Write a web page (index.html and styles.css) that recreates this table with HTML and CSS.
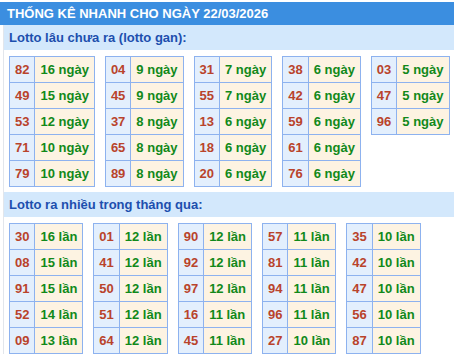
FILE: index.html
```html
<!DOCTYPE html>
<html lang="vi">
<head>
<meta charset="utf-8">
<link rel="stylesheet" href="styles.css">
</head>
<body>
<div class="title">THỐNG KÊ NHANH CHO NGÀY 22/03/2026</div>
<div class="content">
  <div class="head">Lotto lâu chưa ra (lotto gan):</div>
  <div class="tables">
    <table><tr><td class="n">82</td><td class="d">16 ngày</td></tr><tr><td class="n">49</td><td class="d">15 ngày</td></tr><tr><td class="n">53</td><td class="d">12 ngày</td></tr><tr><td class="n">71</td><td class="d">10 ngày</td></tr><tr><td class="n">79</td><td class="d">10 ngày</td></tr></table>
    <table><tr><td class="n">04</td><td class="d">9 ngày</td></tr><tr><td class="n">45</td><td class="d">9 ngày</td></tr><tr><td class="n">37</td><td class="d">8 ngày</td></tr><tr><td class="n">65</td><td class="d">8 ngày</td></tr><tr><td class="n">89</td><td class="d">8 ngày</td></tr></table>
    <table><tr><td class="n">31</td><td class="d">7 ngày</td></tr><tr><td class="n">55</td><td class="d">7 ngày</td></tr><tr><td class="n">13</td><td class="d">6 ngày</td></tr><tr><td class="n">18</td><td class="d">6 ngày</td></tr><tr><td class="n">20</td><td class="d">6 ngày</td></tr></table>
    <table><tr><td class="n">38</td><td class="d">6 ngày</td></tr><tr><td class="n">42</td><td class="d">6 ngày</td></tr><tr><td class="n">59</td><td class="d">6 ngày</td></tr><tr><td class="n">61</td><td class="d">6 ngày</td></tr><tr><td class="n">76</td><td class="d">6 ngày</td></tr></table>
    <table><tr><td class="n">03</td><td class="d">5 ngày</td></tr><tr><td class="n">47</td><td class="d">5 ngày</td></tr><tr><td class="n">96</td><td class="d">5 ngày</td></tr></table>
  </div>
  <div class="head">Lotto ra nhiều trong tháng qua:</div>
  <div class="tables">
    <table><tr><td class="n">30</td><td class="d">16 lần</td></tr><tr><td class="n">08</td><td class="d">15 lần</td></tr><tr><td class="n">91</td><td class="d">15 lần</td></tr><tr><td class="n">52</td><td class="d">14 lần</td></tr><tr><td class="n">09</td><td class="d">13 lần</td></tr></table>
    <table><tr><td class="n">01</td><td class="d">12 lần</td></tr><tr><td class="n">41</td><td class="d">12 lần</td></tr><tr><td class="n">50</td><td class="d">12 lần</td></tr><tr><td class="n">51</td><td class="d">12 lần</td></tr><tr><td class="n">64</td><td class="d">12 lần</td></tr></table>
    <table><tr><td class="n">90</td><td class="d">12 lần</td></tr><tr><td class="n">92</td><td class="d">12 lần</td></tr><tr><td class="n">97</td><td class="d">12 lần</td></tr><tr><td class="n">16</td><td class="d">11 lần</td></tr><tr><td class="n">45</td><td class="d">11 lần</td></tr></table>
    <table><tr><td class="n">57</td><td class="d">11 lần</td></tr><tr><td class="n">81</td><td class="d">11 lần</td></tr><tr><td class="n">94</td><td class="d">11 lần</td></tr><tr><td class="n">96</td><td class="d">11 lần</td></tr><tr><td class="n">27</td><td class="d">10 lần</td></tr></table>
    <table><tr><td class="n">35</td><td class="d">10 lần</td></tr><tr><td class="n">42</td><td class="d">10 lần</td></tr><tr><td class="n">47</td><td class="d">10 lần</td></tr><tr><td class="n">56</td><td class="d">10 lần</td></tr><tr><td class="n">87</td><td class="d">10 lần</td></tr></table>
  </div>
</div>
</body>
</html>
```

FILE: styles.css
```css
html, body {
  margin: 0;
  padding: 0;
  background: #ffffff;
}
body {
  padding-top: 2px;
  font-family: "Liberation Sans", Arial, sans-serif;
  font-size: 13px;
  line-height: 15px;
  font-weight: bold;
}
.title {
  background: #3b8ee0;
  color: #ffffff;
  padding: 4px 0 4px 7px;
  white-space: nowrap;
}
.content {
  margin-left: 3px;
  border-left: 1px solid #e2e6ec;
}
.head {
  background: #d3e8fc;
  color: #1d4fae;
  padding: 5px 0 5px 5px;
  white-space: nowrap;
}
.tables {
  display: flex;
  align-items: flex-start;
  gap: 10px;
  padding-left: 5px;
  margin: 6px 0 5px;
}
table {
  border-collapse: collapse;
}
td {
  border: 1px solid #8db2ef;
  padding: 5px;
  white-space: nowrap;
}
td.n {
  background: #e3effd;
  color: #b9432b;
  text-align: center;
}
td.d {
  background: #fdf3e2;
  color: #11891a;
}
```
